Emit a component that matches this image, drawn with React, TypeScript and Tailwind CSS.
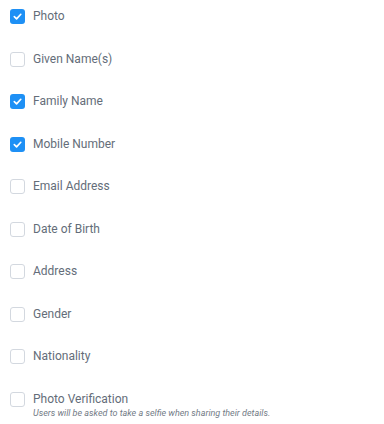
import { useState } from 'react';

const FIELDS = [
  { id: 'photo', label: 'Photo', checked: true },
  { id: 'given', label: 'Given Name(s)', checked: false },
  { id: 'family', label: 'Family Name', checked: true },
  { id: 'mobile', label: 'Mobile Number', checked: true },
  { id: 'email', label: 'Email Address', checked: false },
  { id: 'dob', label: 'Date of Birth', checked: false },
  { id: 'address', label: 'Address', checked: false },
  { id: 'gender', label: 'Gender', checked: false },
  { id: 'nationality', label: 'Nationality', checked: false },
  {
    id: 'verify',
    label: 'Photo Verification',
    checked: false,
    hint: 'Users will be asked to take a selfie when sharing their details.',
  },
];

function Checkbox({ checked }: { checked: boolean }) {
  return checked ? (
    <span className="flex h-[15px] w-[15px] shrink-0 items-center justify-center rounded-[3px] bg-[#1e90f5]">
      <svg width="11" height="11" viewBox="0 0 12 12" fill="none">
        <path d="M2.5 6.2 L5 8.6 L9.6 3.6" stroke="white" strokeWidth="1.8" strokeLinecap="round" strokeLinejoin="round" />
      </svg>
    </span>
  ) : (
    <span className="h-[15px] w-[15px] shrink-0 rounded-[3px] border border-[#d3d8df] bg-white" />
  );
}

export default function App() {
  const [fields, setFields] = useState(FIELDS);

  const toggle = (id: string) =>
    setFields((prev) => prev.map((f) => (f.id === id ? { ...f, checked: !f.checked } : f)));

  return (
    <div className="min-h-[424px] w-[384px] bg-white pl-[10px] pt-[9px]" style={{ fontFamily: 'Roboto, "Liberation Sans", sans-serif' }}>
      <div className="flex flex-col gap-[27.5px]">
        {fields.map((f) => (
          <div key={f.id} className="cursor-pointer" onClick={() => toggle(f.id)}>
            <div className="flex h-[15px] items-center gap-[8px]">
              <Checkbox checked={f.checked} />
              <span className="text-[12px] leading-[15px] text-[#646d79]">{f.label}</span>
            </div>
            {f.hint && (
              <p className="mt-[1px] pl-[23px] text-[9px] italic leading-[11px] text-[#737b86]">{f.hint}</p>
            )}
          </div>
        ))}
      </div>
    </div>
  );
}
